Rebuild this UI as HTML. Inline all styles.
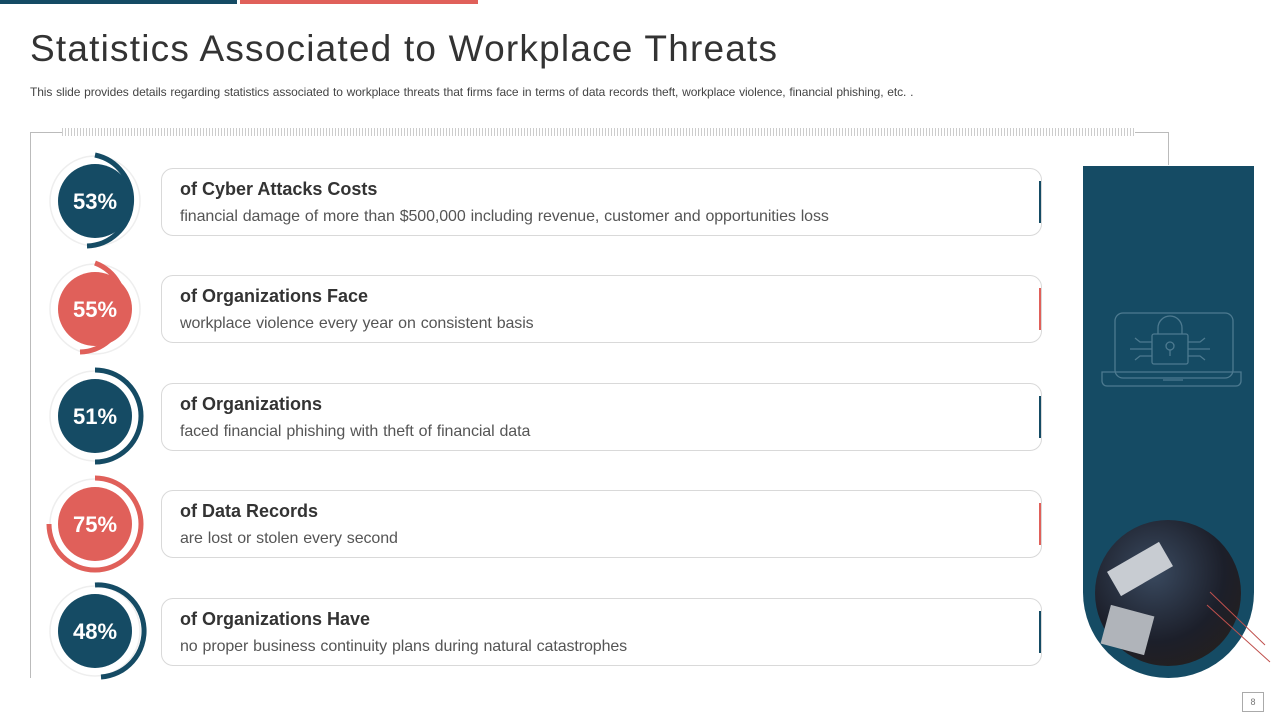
<!DOCTYPE html>
<html><head><meta charset="utf-8"><style>
body{margin:0;width:1280px;height:720px;position:relative;background:#fff;font-family:"Liberation Sans",sans-serif;overflow:hidden}
.a{position:absolute}
h1{position:absolute;left:30px;top:28px;margin:0;font-weight:400;font-size:37px;color:#333;letter-spacing:1.2px}
.sub{left:30px;top:85px;font-size:12px;color:#444;letter-spacing:-0.1px;word-spacing:0.6px}
.card{position:absolute;left:161px;width:879px;height:66px;border:1px solid #d9d9d9;border-radius:12px;background:#fff}
.card b{position:absolute;left:18px;top:10px;font-size:18px;color:#333}
.card span{position:absolute;left:18px;top:39px;font-size:16px;color:#555;word-spacing:0.6px;letter-spacing:-0.1px}
.card i{position:absolute;right:0;top:12px;width:2px;height:42px}
.pct{position:absolute;width:74px;text-align:center;color:#fff;font-weight:bold;font-size:22px}
</style></head><body>
<div class="a" style="left:0;top:0;width:237px;height:4px;background:#154b64"></div>
<div class="a" style="left:240px;top:0;width:238px;height:4px;background:#e0605a"></div>
<h1>Statistics Associated to Workplace Threats</h1>
<div class="a sub">This slide provides details regarding statistics associated to workplace threats that firms face in terms of data records theft, workplace violence, financial phishing, etc. .</div>
<div class="a" style="left:30px;top:132px;width:1138px;height:1px;background:#bbb"></div>
<div class="a" style="left:30px;top:132px;width:1px;height:546px;background:#bbb"></div>
<div class="a" style="left:1168px;top:132px;width:1px;height:33px;background:#bbb"></div>
<div class="a" style="left:62px;top:128px;width:1073px;height:8px;background:repeating-linear-gradient(90deg,#ccc 0 1px,#fff 1px 3px)"></div>
<svg class="a" style="left:0;top:0" width="160" height="720">
<g fill="none">
<circle cx="95" cy="201" r="45" stroke="#eee" stroke-width="1.5"/><path d="M95 155 A46 46 0 0 1 87 246" stroke="#154b64" stroke-width="5"/><circle cx="95" cy="201" r="37" fill="#154b64"/>
<circle cx="95" cy="309" r="45" stroke="#eee" stroke-width="1.5"/><path d="M95 263 A46 46 0 0 1 80 352" stroke="#e0605a" stroke-width="5"/><circle cx="95" cy="309" r="37" fill="#e0605a"/>
<circle cx="95" cy="416" r="45" stroke="#eee" stroke-width="1.5"/><path d="M95 370 A46 46 0 0 1 95 462" stroke="#154b64" stroke-width="5"/><circle cx="95" cy="416" r="37" fill="#154b64"/>
<circle cx="95" cy="524" r="45" stroke="#eee" stroke-width="1.5"/><path d="M95 478 A46 46 0 1 1 49 524" stroke="#e0605a" stroke-width="5"/><circle cx="95" cy="524" r="37" fill="#e0605a"/>
<circle cx="95" cy="631" r="45" stroke="#eee" stroke-width="1.5"/><path d="M95 585 A46 46 0 0 1 101 677" stroke="#154b64" stroke-width="5"/><circle cx="95" cy="631" r="37" fill="#154b64"/>
</g></svg>
<div class="pct" style="left:58px;top:189px">53%</div>
<div class="pct" style="left:58px;top:297px">55%</div>
<div class="pct" style="left:58px;top:404px">51%</div>
<div class="pct" style="left:58px;top:512px">75%</div>
<div class="pct" style="left:58px;top:619px">48%</div>
<div class="card" style="top:168px"><b>of Cyber Attacks Costs</b><span>financial damage of more than $500,000 including revenue, customer and opportunities loss</span><i style="background:#154b64"></i></div>
<div class="card" style="top:275px"><b>of Organizations Face</b><span>workplace violence every year on consistent basis</span><i style="background:#e0605a"></i></div>
<div class="card" style="top:383px"><b>of Organizations</b><span>faced financial phishing with theft of financial data</span><i style="background:#154b64"></i></div>
<div class="card" style="top:490px"><b>of Data Records</b><span>are lost or stolen every second</span><i style="background:#e0605a"></i></div>
<div class="card" style="top:598px"><b>of Organizations Have</b><span>no proper business continuity plans during natural catastrophes</span><i style="background:#154b64"></i></div>
<div class="a" style="left:1083px;top:166px;width:171px;height:512px;background:#154b64;border-radius:0 0 86px 86px"></div>
<svg class="a" style="left:1095px;top:305px" width="150" height="90" fill="none" stroke="#4d7a90" stroke-width="1.3">
<rect x="20" y="8" width="118" height="65" rx="8"/><path d="M7 67 H146 V76 a5 5 0 0 1-5 5 H12 a5 5 0 0 1-5-5Z"/><path d="M68 75h20"/>
<rect x="57" y="29" width="36" height="30" rx="2"/><path d="M63 29v-6a12 12 0 0 1 24 0v6"/><circle cx="75" cy="41" r="4"/><path d="M75 45v6"/>
<path d="M57 37h-12l-5-4M57 44H35M57 51h-12l-5 4M93 37h12l5-4M93 44h22M93 51h12l5 4"/></svg>
<div class="a" style="left:1095px;top:520px;width:146px;height:146px;border-radius:50%;background:radial-gradient(circle at 40% 35%,#3a4a60,#1c1f2a 55%,#2a2018)"></div>
<div class="a" style="left:1110px;top:555px;width:60px;height:28px;background:#c8ccd2;transform:rotate(-30deg)"></div>
<div class="a" style="left:1105px;top:610px;width:45px;height:40px;background:#b0b4ba;transform:rotate(15deg)"></div>
<svg class="a" style="left:1205px;top:590px" width="70" height="75"><path d="M5 2 L60 55 M2 15 L65 72" stroke="#c0504d" stroke-width="1"/></svg>
<div class="a" style="left:1242px;top:692px;width:20px;height:18px;border:1px solid #aaa;font-size:9px;color:#777;text-align:center;line-height:18px">8</div>
</body></html>
